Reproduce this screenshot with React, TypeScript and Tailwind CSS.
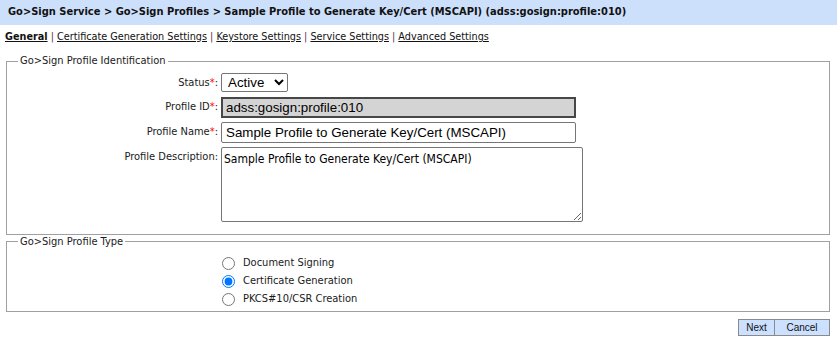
const tabs = [
  'Certificate Generation Settings',
  'Keystore Settings',
  'Service Settings',
  'Advanced Settings',
];

const profileTypes = [
  { id: 'doc', label: 'Document Signing', checked: false },
  { id: 'cert', label: 'Certificate Generation', checked: true },
  { id: 'csr', label: 'PKCS#10/CSR Creation', checked: false },
];

const Req = () => <span className="text-[#ff0000]">*</span>;

export default function App() {
  return (
    <div className="w-[837px] h-[341px] bg-white text-[11px] text-[#1a1a1a] font-['Tahoma','DejaVu_Sans_Condensed','DejaVu_Sans',sans-serif]">
      <div className="h-[25px] bg-[#cde0fb] pl-[8px] flex items-center font-bold text-[11px] text-[#111]">
        Go&gt;Sign Service &gt; Go&gt;Sign Profiles &gt; Sample Profile to Generate Key/Cert (MSCAPI) (adss:gosign:profile:010)
      </div>

      <div className="pl-[5px] pt-[4px] h-[20px] leading-[15px] text-[10.75px]">
        <a className="font-bold underline text-[#111]">General</a>
        {tabs.map((t) => (
          <span key={t}>
            <span className="text-[#5b2a4e]"> | </span>
            <a className="underline text-[#111]">{t}</a>
          </span>
        ))}
      </div>

      <fieldset className="ml-[6px] mr-[7px] mt-[9px] border border-[#a0a0a0] pb-[12px]">
        <legend className="ml-[11px] px-[2px] leading-[14px]">Go&gt;Sign Profile Identification</legend>
        <div className="grid grid-cols-[211px_auto] gap-x-[3px] gap-y-[4px] pt-[5px]">
          <div className="text-right self-center">Status<Req />:</div>
          <div>
            <select
              defaultValue="Active"
              className="w-[67px] h-[19px] border border-[#767676] rounded-[2px] bg-white text-black text-[13.33px] font-['Arial','Liberation_Sans',sans-serif] pl-[2px]"
            >
              <option>Active</option>
              <option>Inactive</option>
            </select>
          </div>

          <div className="text-right self-center">Profile ID<Req />:</div>
          <div>
            <input
              readOnly
              value="adss:gosign:profile:010"
              className="w-[355px] h-[21px] border-2 border-[#474747] bg-[#d4d4d4] text-black px-[3px] text-[13.33px] font-['Arial','Liberation_Sans',sans-serif]"
            />
          </div>

          <div className="text-right self-center">Profile Name<Req />:</div>
          <div>
            <input
              defaultValue="Sample Profile to Generate Key/Cert (MSCAPI)"
              className="w-[355px] h-[21px] border border-[#767676] rounded-[2px] bg-white text-black px-[4px] text-[13.33px] font-['Arial','Liberation_Sans',sans-serif]"
            />
          </div>

          <div className="text-right pt-[2px]">Profile Description:</div>
          <div>
            <textarea
              defaultValue="Sample Profile to Generate Key/Cert (MSCAPI)"
              className="block w-[362px] h-[75px] border border-[#767676] rounded-[2px] bg-white text-black px-[2px] py-[2px] text-[12px] resize-y"
            />
          </div>
        </div>
      </fieldset>

      <fieldset className="ml-[6px] mr-[7px] border border-[#a0a0a0] pb-[5px]">
        <legend className="ml-[11px] px-[2px] leading-[14px]">Go&gt;Sign Profile Type</legend>
        <div className="pl-[215px] pt-[8px] flex flex-col gap-[5px]">
          {profileTypes.map((p) => (
            <label key={p.id} className="flex items-center gap-[8px] h-[13px]">
              <input type="radio" name="ptype" defaultChecked={p.checked} className="w-[13px] h-[13px] m-0" />
              <span>{p.label}</span>
            </label>
          ))}
        </div>
      </fieldset>

      <div className="flex justify-end mr-[7px] mt-[7px]">
        <button className="h-[17px] w-[37px] border border-[#8a8a8a] bg-[#cce0ff] text-[10px] text-[#111] font-['Arial','Liberation_Sans',sans-serif] leading-[15px]">
          Next
        </button>
        <button className="h-[17px] w-[55px] border border-l-0 border-[#8a8a8a] bg-[#cce0ff] text-[10px] text-[#111] font-['Arial','Liberation_Sans',sans-serif] leading-[15px]">
          Cancel
        </button>
      </div>
    </div>
  );
}
